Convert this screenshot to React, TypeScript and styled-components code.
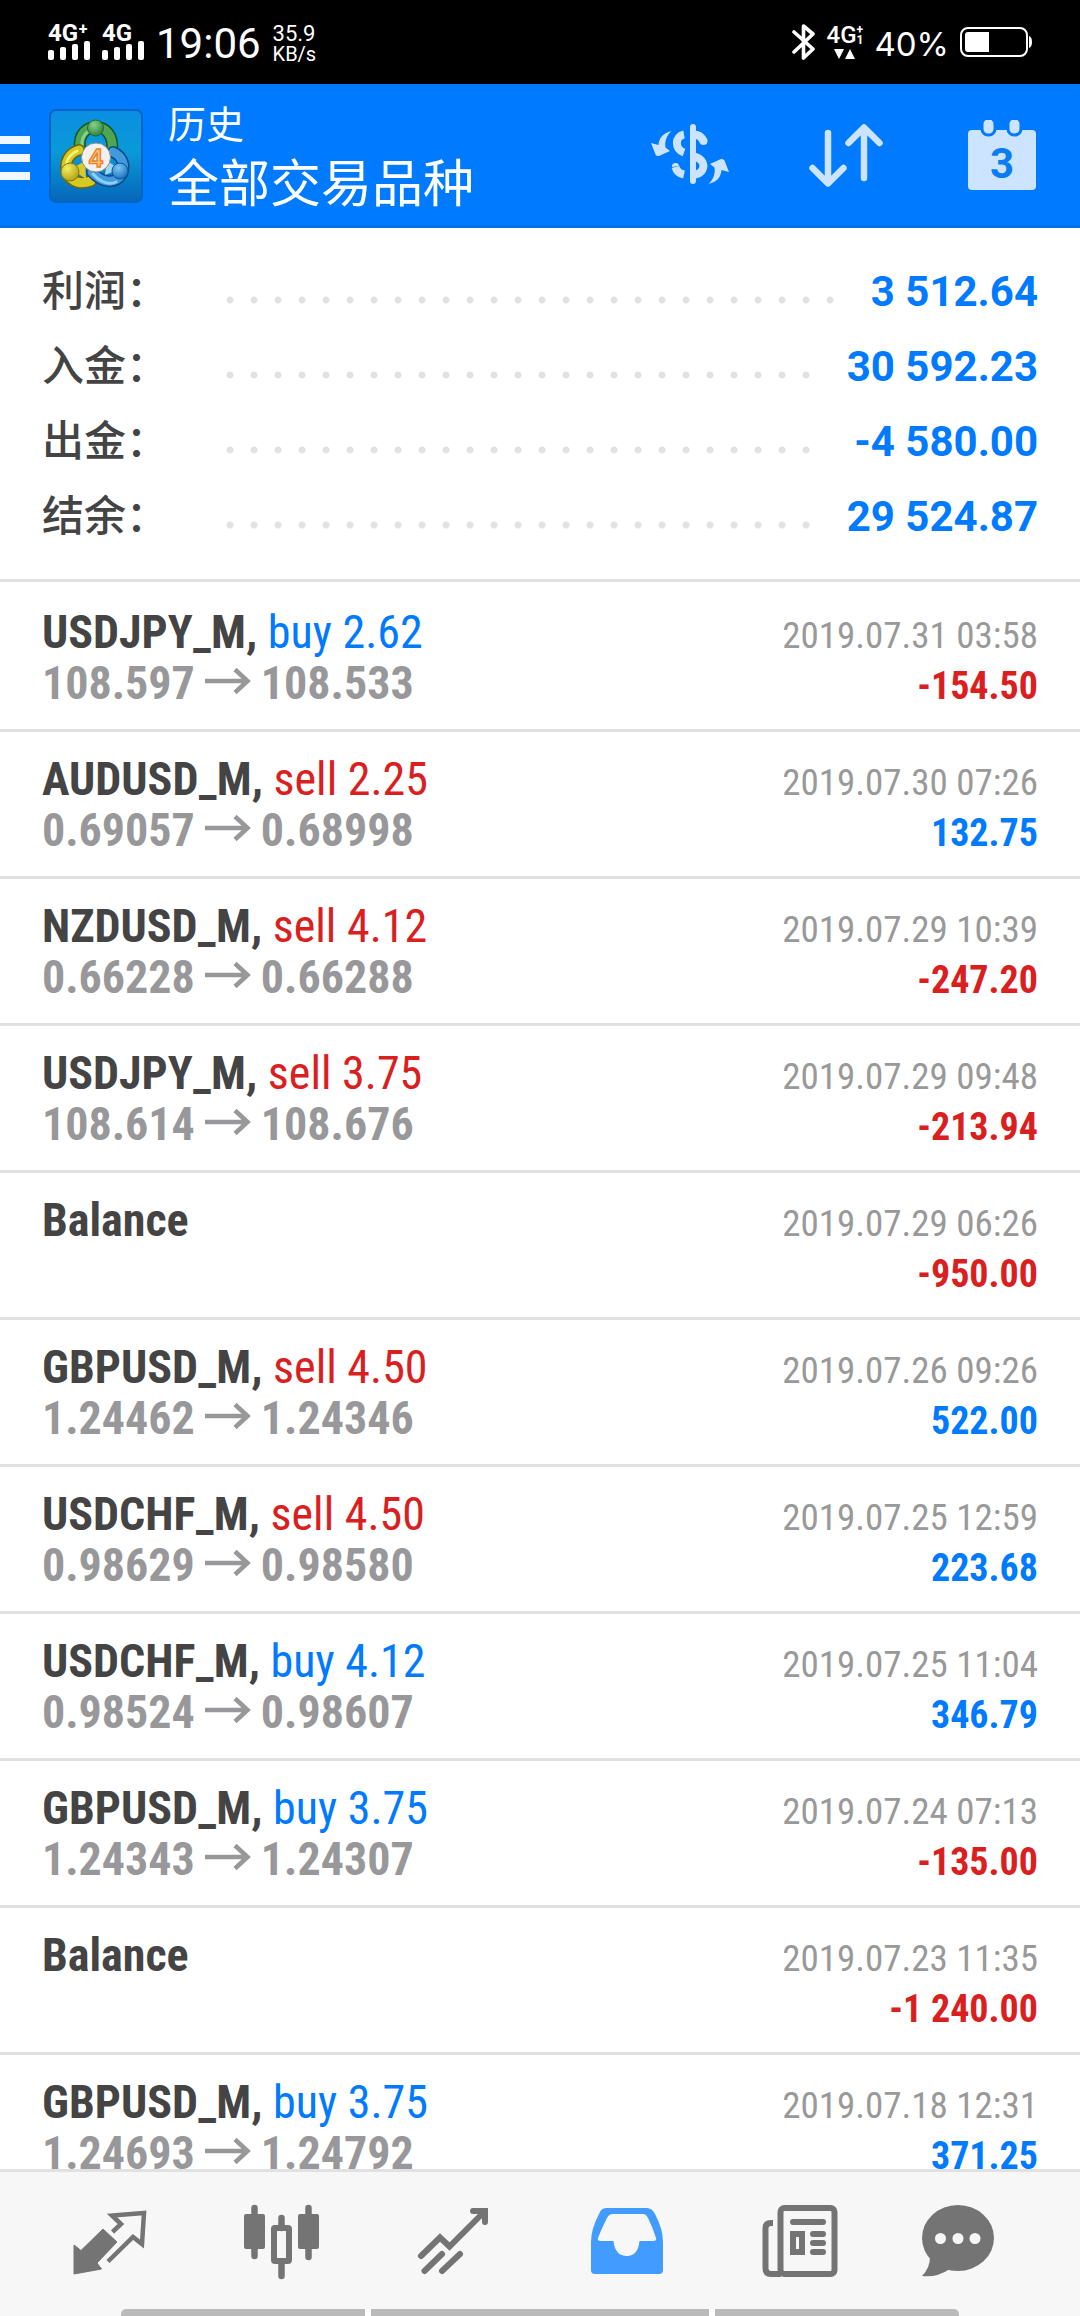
import React from "react";
import styled, { createGlobalStyle } from "styled-components";

const GlobalStyle = createGlobalStyle`
  * { box-sizing: border-box; }
  body {
    margin: 0;
    background: #ffffff;
    font-family: Roboto, "Noto Sans CJK SC", sans-serif;
  }
  button {
    margin: 0;
    padding: 0;
    border: 0;
    background: none;
    font: inherit;
    cursor: pointer;
  }
  svg { display: block; }
`;

const condensed = `"Roboto Condensed", "Liberation Sans Narrow", Roboto, sans-serif`;

const Screen = styled.div`
  display: flex;
  flex-direction: column;
  height: 100vh;
  overflow: hidden;
`;

/* ---------- status bar ---------- */

const StatusBar = styled.div`
  display: flex;
  flex: none;
  align-items: center;
  justify-content: space-between;
  height: 84px;
  padding: 0 48px;
  background: #000000;
  color: #ffffff;
`;

const StatusGroup = styled.div<{ $gap: number }>`
  display: flex;
  align-items: center;
  gap: ${(p) => p.$gap}px;
`;

const Signal = styled.div`
  display: flex;
  flex-direction: column;
  width: 42px;
`;

const SignalLabel = styled.span`
  height: 17px;
  font-size: 24px;
  font-weight: 700;
  line-height: 18px;
  white-space: nowrap;
`;

const Clock = styled.span`
  padding-top: 4px;
  font-size: 42px;
  line-height: 48px;
`;

const NetSpeed = styled.span`
  display: flex;
  flex-direction: column;
  padding-top: 4px;
  font-size: 22px;
  line-height: 20px;
`;

const SpeedUnit = styled.span`
  font-size: 20px;
`;

const DataNetwork = styled.div`
  display: flex;
  flex-direction: column;
  align-items: center;
  gap: 4px;
`;

const DataLabel = styled.span`
  display: flex;
  font-size: 24px;
  font-weight: 500;
  line-height: 20px;
`;

const DataMarks = styled.span`
  display: flex;
  flex-direction: column;
  font-size: 12px;
  font-weight: 700;
  line-height: 10px;
`;

const BatteryText = styled.span`
  padding-top: 4px;
  font-family: Inter, Roboto, sans-serif;
  font-size: 33px;
  line-height: 40px;
`;

/* ---------- title bar ---------- */

const TitleBar = styled.header`
  display: flex;
  flex: none;
  align-items: center;
  height: 144px;
  padding-right: 37px;
  background: #007aff;
  box-shadow: inset 0 -3px 0 #0071e6;
  color: #ffffff;
`;

const MenuButton = styled.button`
  display: flex;
  flex-direction: column;
  gap: 10px;
  width: 30px;
  margin-right: 19px;
  padding-top: 4px;
`;

const MenuBar = styled.span`
  height: 8px;
  background: #f0f7ff;
`;

const Titles = styled.div`
  display: flex;
  flex: 1;
  flex-direction: column;
  padding: 4px 0 0 25px;
`;

const Section = styled.span`
  font-size: 38px;
  line-height: 54px;
`;

const Subject = styled.h1`
  margin: 0;
  font-size: 51px;
  font-weight: 400;
  line-height: 66px;
`;

const Actions = styled.div`
  display: flex;
  gap: 76px;
`;

/* ---------- account summary ---------- */

const Scroller = styled.main`
  flex: 1;
  min-height: 0;
  overflow: hidden;
`;

const Summary = styled.dl`
  margin: 0;
  padding: 26px 42px 25px;
  border-bottom: 3px solid #e1e1e3;
`;

const SummaryRow = styled.div`
  display: flex;
  height: 75px;
  align-items: center;
  font-size: 42px;
  line-height: 60px;
`;

const SummaryLabel = styled.dt`
  width: 184px;
  color: #444444;
  font-weight: 500;
`;

const Leader = styled.span`
  flex: 1;
  height: 8px;
  margin: 16px 32px 0 0;
  background: radial-gradient(circle at 4px 4px, #e2e2e2 3px, transparent 4px) 0 0 / 24px 8px repeat-x;
`;

const SummaryValue = styled.dd`
  margin: 0;
  color: #007aff;
  font-weight: 700;
`;

/* ---------- history list ---------- */

const List = styled.ul`
  margin: 0;
  padding: 0;
  list-style: none;
`;

const Item = styled.li`
  height: 147px;
  padding: 22px 42px 0;
  border-top: 3px solid #e1e1e3;
  font-family: ${condensed};

  &:first-child {
    border-top-color: transparent;
  }
`;

const Line = styled.div`
  display: flex;
  align-items: baseline;
  height: 51px;
  font-size: 46px;
  line-height: 51px;
  white-space: nowrap;

  /* keeps one baseline for lines that have nothing on the left */
  &::before {
    content: "\\200b";
  }
`;

const SymbolName = styled.span`
  color: #444444;
  font-weight: 700;
`;

const tones = { buy: "#007aff", sell: "#d9201f" };

const Order = styled.span<{ $side: "buy" | "sell" }>`
  color: ${(p) => tones[p.$side]};
  font-weight: 400;
`;

const Prices = styled.span`
  display: flex;
  align-items: baseline;
  gap: 9px;
  color: #98989a;
  font-weight: 700;
`;

const Time = styled.time`
  margin-left: auto;
  color: #999999;
  font-size: 37px;
`;

const Profit = styled.span<{ $loss: boolean }>`
  margin-left: auto;
  color: ${(p) => (p.$loss ? tones.sell : tones.buy)};
  font-size: 38px;
  font-weight: 700;
`;

/* ---------- bottom navigation ---------- */

const TabBar = styled.nav`
  display: flex;
  flex: none;
  flex-direction: column;
  justify-content: space-between;
  height: 147px;
  border-top: 3px solid #e1e1e3;
  background: #f7f7f7;
`;

const Tabs = styled.div`
  display: grid;
  grid-template-columns: repeat(6, 1fr);
  padding: 28px 24px 0;
`;

const Tab = styled.button<{ $active?: boolean }>`
  display: flex;
  justify-content: center;
  color: ${(p) => (p.$active ? "#429cff" : "#747474")};
`;

const GestureBar = styled.div`
  display: grid;
  grid-template-columns: 244fr 338fr 244fr;
  gap: 6px;
  height: 7px;
  margin: 0 121px;
  overflow: hidden;
  border-radius: 5px 5px 0 0;
  background: #ffffff;
`;

const Gesture = styled.span`
  background: #bababa;
`;

/* ---------- drawings ---------- */

const SignalBars = () => (
  <svg width="42" height="20" viewBox="0 0 42 20" fill="#fff" aria-hidden="true">
    <rect x="0" y="9" width="6" height="10" rx="2" />
    <rect x="12" y="6" width="6" height="13" rx="2" />
    <rect x="24" y="3" width="6" height="16" rx="2" />
    <rect x="36" y="0" width="6" height="19" rx="2" />
  </svg>
);

const Bluetooth = () => (
  <svg width="24" height="36" viewBox="0 0 24 36" fill="none" stroke="#fff" strokeWidth="3.6" strokeLinejoin="round" strokeLinecap="round" aria-hidden="true">
    <path d="M2 8 L21 25 L11.500 34 V2 L21 10 L2 28" />
  </svg>
);

const Battery = () => (
  <svg width="72" height="30" viewBox="0 0 72 30" aria-hidden="true">
    <rect x="1" y="1" width="66" height="28" rx="7" fill="none" stroke="#fff" strokeWidth="2" />
    <path d="M8 5 H29 V25 H8 Q5 25 5 22 V8 Q5 5 8 5z M69 9 Q72 10 72 15 Q72 20 69 21z" fill="#fff" />
  </svg>
);

const AppLogo = () => (
  <svg width="94" height="94" viewBox="0 0 94 94" aria-hidden="true">
    <defs>
      <linearGradient id="tile" x1="0" y1="0" x2="0" y2="1">
        <stop offset="0" stopColor="#0a8ee2" />
        <stop offset="0.45" stopColor="#0a9ad8" />
        <stop offset="1" stopColor="#0566b8" />
      </linearGradient>
      <radialGradient id="green" cx="0.4" cy="0.3" r="0.8">
        <stop offset="0" stopColor="#8fd08a" />
        <stop offset="1" stopColor="#1c7a35" />
      </radialGradient>
      <radialGradient id="yellow" cx="0.35" cy="0.3" r="0.8">
        <stop offset="0" stopColor="#f6ee60" />
        <stop offset="1" stopColor="#a99a10" />
      </radialGradient>
      <radialGradient id="blue" cx="0.4" cy="0.3" r="0.8">
        <stop offset="0" stopColor="#7cc8f6" />
        <stop offset="1" stopColor="#0f68b8" />
      </radialGradient>
    </defs>
    <rect x="1" y="1" width="92" height="92" rx="6" fill="url(#tile)" stroke="#0763c4" strokeWidth="2" />
    <g fill="none" strokeLinecap="round">
      <path d="M31 39 C29 25 38 18 47 18 C56 18 65 26 63 42" stroke="#12552a" strokeWidth="12" />
      <path d="M31 39 C29 25 38 18 47 18 C56 18 65 26 63 42" stroke="#4ea653" strokeWidth="9" />
      <path d="M33 37 C32 27 39 20 47 20" stroke="#8ccf88" strokeWidth="3" />
      <path d="M30 41 C20 44 15 53 18 64 C23 75 34 75 42 72" stroke="#6d6510" strokeWidth="12" />
      <path d="M30 41 C20 44 15 53 18 64 C23 75 34 75 42 72" stroke="#d6c922" strokeWidth="9" />
      <path d="M28 42 C20 46 16 53 18 61" stroke="#f7f07a" strokeWidth="3" />
      <path d="M64 43 C73 47 77 56 73 65 C67 75 54 75 43 63" stroke="#0b4a86" strokeWidth="12" />
      <path d="M64 43 C73 47 77 56 73 65 C67 75 54 75 43 63" stroke="#3f9ade" strokeWidth="9" />
      <path d="M67 73 C58 77 49 71 44 65" stroke="#8fd0f8" strokeWidth="3" />
    </g>
    <path d="M22 60 L36 52 L37 70z" fill="#d8ca2a" />
    <path d="M71 60 L58 52 L56 66z" fill="#9fd6f5" />
    <circle cx="46.500" cy="19" r="8" fill="url(#green)" stroke="#1a6b32" />
    <circle cx="21" cy="63" r="9" fill="url(#yellow)" stroke="#857a10" />
    <circle cx="71" cy="62" r="8" fill="url(#blue)" stroke="#0e5598" />
    <circle cx="47" cy="48.500" r="14.500" fill="#f3f1f0" stroke="#8d8d86" />
    <text x="47" y="58" textAnchor="middle" fontFamily="Liberation Sans, sans-serif" fontWeight="700" fontSize="25" fill="#f6c48e" stroke="#ee8220" strokeWidth="1.400">4</text>
  </svg>
);

const CurrencyIcon = () => (
  <svg width="80" height="72" viewBox="651 120 80 72" fill="none" stroke="#cce4ff" strokeWidth="8" aria-hidden="true">
    <path d="M693 127 V181" strokeWidth="6" strokeLinecap="round" />
    <path d="M684 134.500 C675 136 674 149 684 152.500 M675.500 167 Q677 173 684 174.500" />
    <path d="M672 167 A3.500 3.500 0 0 1 679 166z" fill="#cce4ff" stroke="none" />
    <path d="M694 134.500 Q701 135 703.500 141" />
    <circle cx="703.500" cy="141" r="4" fill="#cce4ff" stroke="none" />
    <path d="M694 156.500 C708 160 705 174 694 174.500" />
    <g fill="#cce4ff" stroke="none">
      <path d="M671.500 131 C663 133 659 138 658.500 145 L651 143 L655.500 154.500 Q656.500 156.500 659 156 L670 151 L665.500 147.500 C664.500 141 667 135 671.500 131z" />
      <path transform="rotate(180 690 157.500)" d="M671.500 131 C663 133 659 138 658.500 145 L651 143 L655.500 154.500 Q656.500 156.500 659 156 L670 151 L665.500 147.500 C664.500 141 667 135 671.500 131z" />
    </g>
  </svg>
);

const SortIcon = () => (
  <svg width="80" height="72" viewBox="807 120 80 72" fill="none" stroke="#cce4ff" strokeWidth="6.500" strokeLinecap="round" strokeLinejoin="round" aria-hidden="true">
    <path d="M828 133 V183 M812.500 168 L828 183.500 L843.500 168" />
    <path d="M864 178 V128 M848.500 143 L864 127.500 L879.500 143" />
  </svg>
);

const CalendarIcon = () => (
  <svg width="80" height="72" viewBox="963 120 80 72" aria-hidden="true">
    <rect x="968" y="130" width="68" height="60" rx="4" fill="#cce4ff" />
    <g fill="#cce4ff" stroke="#007aff" strokeWidth="3">
      <rect x="982" y="118" width="13" height="17" rx="6" />
      <rect x="1008" y="118" width="13" height="17" rx="6" />
    </g>
    <text x="1002" y="178" textAnchor="middle" fontFamily="Roboto, sans-serif" fontWeight="700" fontSize="42" fill="#0a7df5">3</text>
  </svg>
);

const LongArrow = () => (
  <svg width="48" height="32" viewBox="0 0 48 32" fill="none" stroke="#98989a" strokeWidth="4.500" aria-hidden="true">
    <path d="M1 14 H44 M31 2.500 L43.500 14 L31 25.500" />
  </svg>
);

const TabIcon = ({ children }: { children: React.ReactNode }) => (
  <svg width="96" height="82" viewBox="0 0 96 82" fill="none" stroke="currentColor" aria-hidden="true">
    {children}
  </svg>
);

const QuotesIcon = () => (
  <TabIcon>
    <path d="M12 45 L19 50.500 L41 29 L55 42 L35 63 L39.500 69 L12 74z" fill="currentColor" strokeLinejoin="round" />
    <path d="M50.500 32 L59 24 L50 15.500 L82 13 L80 44 L71 37 L46 61.500" strokeWidth="4.500" />
  </TabIcon>
);

const ChartIcon = () => (
  <TabIcon>
    <g strokeWidth="6.500" strokeLinecap="round">
      <path d="M20.500 8 V56 M74.500 8 V57 M47.500 18 V28 M47.500 64 V76" />
    </g>
    <g fill="currentColor" stroke="none">
      <rect x="10" y="14" width="21" height="35" rx="2" />
      <rect x="64" y="14" width="21" height="35" rx="2" />
    </g>
    <rect x="40" y="28" width="15" height="33" rx="1" strokeWidth="6" />
  </TabIcon>
);

const TradeIcon = () => (
  <TabIcon>
    <g strokeWidth="6" strokeLinecap="round">
      <path d="M15 56 L34 37.500 L43.500 46.500 L78 12" strokeLinejoin="miter" />
      <path d="M67 11 H79 V22 M18.500 71 L36 54 M36 71 L54 54" />
    </g>
  </TabIcon>
);

const HistoryIcon = () => (
  <TabIcon>
    <path
      fill="currentColor"
      stroke="none"
      fillRule="evenodd"
      d="M28 8 H69 Q74 8 77 14 Q85 29 85 42 V70 Q85 74 81 74 H17 Q13 74 13 70 V42 Q13 29 21 14 Q23 8 28 8z M35 14 Q31 14 29 18 Q23 30 20 38 Q19 41 23 41 H35.500 Q37 56 49 56 Q60 56 61.500 41 H75 Q79 41 78 38 Q75 28 70 18 Q68 14 65 14z"
    />
  </TabIcon>
);

const NewsIcon = () => (
  <TabIcon>
    <g strokeWidth="6">
      <rect x="30.500" y="8" width="54" height="66" rx="4" />
      <path d="M23 23 H21 Q15.500 23 15.500 28 V68 Q15.500 74 21 74 H31" />
      <path d="M43 22 H73 M63 34 H73 M63 43 H73 M63 52 H73" strokeLinecap="round" />
      <rect x="43" y="34" width="9" height="18" />
    </g>
  </TabIcon>
);

const MailIcon = () => (
  <TabIcon>
    <g fill="currentColor" stroke="none">
      <ellipse cx="36" cy="38" rx="36" ry="33" />
      <path d="M8 57 Q8 68 0 76 Q14 78 28 69z" />
    </g>
    <g fill="#f7f7f7" stroke="none">
      <circle cx="18.500" cy="38.500" r="5.500" />
      <circle cx="36" cy="38.500" r="5.500" />
      <circle cx="53" cy="38.500" r="5.500" />
    </g>
  </TabIcon>
);

/* ---------- data ---------- */

const summary = [
  { label: "利润：", value: "3 512.64" },
  { label: "入金：", value: "30 592.23" },
  { label: "出金：", value: "-4 580.00" },
  { label: "结余：", value: "29 524.87" },
];

type Deal = {
  name: string;
  side?: "buy" | "sell";
  volume?: string;
  open?: string;
  close?: string;
  time: string;
  profit: string;
};

const deals: Deal[] = [
  { name: "USDJPY_M", side: "buy", volume: "2.62", open: "108.597", close: "108.533", time: "2019.07.31 03:58", profit: "-154.50" },
  { name: "AUDUSD_M", side: "sell", volume: "2.25", open: "0.69057", close: "0.68998", time: "2019.07.30 07:26", profit: "132.75" },
  { name: "NZDUSD_M", side: "sell", volume: "4.12", open: "0.66228", close: "0.66288", time: "2019.07.29 10:39", profit: "-247.20" },
  { name: "USDJPY_M", side: "sell", volume: "3.75", open: "108.614", close: "108.676", time: "2019.07.29 09:48", profit: "-213.94" },
  { name: "Balance", time: "2019.07.29 06:26", profit: "-950.00" },
  { name: "GBPUSD_M", side: "sell", volume: "4.50", open: "1.24462", close: "1.24346", time: "2019.07.26 09:26", profit: "522.00" },
  { name: "USDCHF_M", side: "sell", volume: "4.50", open: "0.98629", close: "0.98580", time: "2019.07.25 12:59", profit: "223.68" },
  { name: "USDCHF_M", side: "buy", volume: "4.12", open: "0.98524", close: "0.98607", time: "2019.07.25 11:04", profit: "346.79" },
  { name: "GBPUSD_M", side: "buy", volume: "3.75", open: "1.24343", close: "1.24307", time: "2019.07.24 07:13", profit: "-135.00" },
  { name: "Balance", time: "2019.07.23 11:35", profit: "-1 240.00" },
  { name: "GBPUSD_M", side: "buy", volume: "3.75", open: "1.24693", close: "1.24792", time: "2019.07.18 12:31", profit: "371.25" },
];

const DealRow = ({ deal }: { deal: Deal }) => (
  <Item>
    <Line>
      <SymbolName>
        {deal.name}
        {deal.side && (
          <>
            , <Order $side={deal.side}>{deal.side} {deal.volume}</Order>
          </>
        )}
      </SymbolName>
      <Time>{deal.time}</Time>
    </Line>
    <Line>
      {deal.open && (
        <Prices>
          {deal.open}
          <LongArrow />
          {deal.close}
        </Prices>
      )}
      <Profit $loss={deal.profit.startsWith("-")}>{deal.profit}</Profit>
    </Line>
  </Item>
);

export default function App() {
  return (
    <Screen>
      <GlobalStyle />
      <StatusBar>
        <StatusGroup $gap={12}>
          <Signal>
            <SignalLabel>4G⁺</SignalLabel>
            <SignalBars />
          </Signal>
          <Signal>
            <SignalLabel>4G</SignalLabel>
            <SignalBars />
          </Signal>
          <Clock>19:06</Clock>
          <NetSpeed>
            35.9
            <SpeedUnit>KB/s</SpeedUnit>
          </NetSpeed>
        </StatusGroup>
        <StatusGroup $gap={11}>
          <Bluetooth />
          <DataNetwork>
            <DataLabel>
              4G
              <DataMarks>
                <span>+</span>
                <span>1</span>
              </DataMarks>
            </DataLabel>
            <svg width="22" height="10" viewBox="0 0 22 10" fill="#fff" aria-hidden="true">
              <path d="M0 0 H10 L5 10z M11 10 H21 L16 0z" />
            </svg>
          </DataNetwork>
          <BatteryText>40%</BatteryText>
          <Battery />
        </StatusGroup>
      </StatusBar>

      <TitleBar>
        <MenuButton aria-label="Menu">
          <MenuBar />
          <MenuBar />
          <MenuBar />
        </MenuButton>
        <AppLogo />
        <Titles>
          <Section>历史</Section>
          <Subject>全部交易品种</Subject>
        </Titles>
        <Actions>
          <button aria-label="Currency"><CurrencyIcon /></button>
          <button aria-label="Sort"><SortIcon /></button>
          <button aria-label="Period"><CalendarIcon /></button>
        </Actions>
      </TitleBar>

      <Scroller>
        <Summary>
          {summary.map((row) => (
            <SummaryRow key={row.label}>
              <SummaryLabel>{row.label}</SummaryLabel>
              <Leader />
              <SummaryValue>{row.value}</SummaryValue>
            </SummaryRow>
          ))}
        </Summary>
        <List>
          {deals.map((deal) => (
            <DealRow key={deal.time} deal={deal} />
          ))}
        </List>
      </Scroller>

      <TabBar>
        <Tabs>
          <Tab aria-label="Quotes"><QuotesIcon /></Tab>
          <Tab aria-label="Charts"><ChartIcon /></Tab>
          <Tab aria-label="Trade"><TradeIcon /></Tab>
          <Tab aria-label="History" $active><HistoryIcon /></Tab>
          <Tab aria-label="News"><NewsIcon /></Tab>
          <Tab aria-label="Messages"><MailIcon /></Tab>
        </Tabs>
        <GestureBar>
          <Gesture />
          <Gesture />
          <Gesture />
        </GestureBar>
      </TabBar>
    </Screen>
  );
}
